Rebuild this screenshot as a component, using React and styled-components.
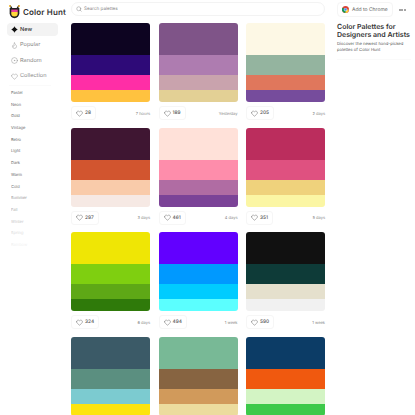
import React from 'react';
import styled, {createGlobalStyle} from 'styled-components';
import {Search, Flame, CircleDot, Heart} from 'lucide-react';

const GlobalStyle = createGlobalStyle`
  html, body {
    margin: 0;
    height: 415px;
    overflow: hidden;
    background: #fff;
    font-family: "Inter", "Open Sans", sans-serif;
    text-rendering: geometricPrecision;
    color: #333;
  }
`;

const palettes = [
  {colors: ['#0d0421', '#2e0a78', '#ff2ea6', '#ffc23f'], likes: 28, time: '7 hours'},
  {colors: ['#7f5488', '#ae7cb0', '#c9a3ad', '#e3d095'], likes: 189, time: 'Yesterday'},
  {colors: ['#fdf8e5', '#94b49f', '#e0775c', '#764c9c'], likes: 205, time: '2 days'},
  {colors: ['#3f1632', '#d2552f', '#f9cbaa', '#f6e9e4'], likes: 297, time: '3 days'},
  {colors: ['#ffe1d9', '#fe8dab', '#b06ca3', '#7b4397'], likes: 461, time: '4 days'},
  {colors: ['#bb2d5d', '#df5180', '#efd27c', '#fbf6a4'], likes: 351, time: '5 days'},
  {colors: ['#efe605', '#7fcf10', '#5ea816', '#2f7a0a'], likes: 324, time: '6 days'},
  {colors: ['#6200ff', '#0099ff', '#00ccff', '#5bffff'], likes: 494, time: '1 week'},
  {colors: ['#111111', '#0e3b38', '#e5e0cd', '#f1f1f1'], likes: 590, time: '1 week'},
  {colors: ['#3b5a67', '#5b8f80', '#7ccbd0', '#fde40e'], likes: 0, time: ''},
  {colors: ['#78b996', '#876441', '#d19a5b', '#ecdc9e'], likes: 0, time: ''},
  {colors: ['#0c3c66', '#f0590f', '#d3f4c4', '#3dc94a'], likes: 0, time: ''},
];

const tags = ['Pastel', 'Neon', 'Gold', 'Vintage', 'Retro', 'Light', 'Dark', 'Warm', 'Cold', 'Summer', 'Fall', 'Winter', 'Spring', 'Rainbow'];

const Page = styled.div`
  display: grid;
  grid-template-columns: 71px 254px 90px;
  grid-template-rows: 23px 392px;
  height: 415px;
  overflow: hidden;
`;

const LogoRow = styled.div`
  display: flex;
  align-items: center;
  gap: 2px;
  padding: 0 0 0 8px;
`;

const LogoName = styled.span`
  font-size: 8px;
  font-weight: 600;
  letter-spacing: 0.15px;
  color: #333;
  white-space: nowrap;
`;

const SearchCell = styled.div`
  padding-top: 2px;
`;

const SearchBar = styled.div`
  display: flex;
  align-items: center;
  gap: 2px;
  height: 14px;
  box-sizing: border-box;
  padding-left: 4px;
  border: 1px solid #f3f3f3;
  border-radius: 7px;
  color: #888;
  font-size: 4.6px;
`;

const TopRight = styled.div`
  display: flex;
  align-items: center;
  justify-content: space-between;
  padding: 2px 9px 0 12px;
  align-self: start;
`;

const ChromeButton = styled.div`
  display: flex;
  align-items: center;
  gap: 3px;
  height: 13px;
  padding: 0 4px;
  border: 1px solid #f5f5f5;
  border-radius: 4px;
  font-size: 5px;
  color: #666;
  white-space: nowrap;
`;

const Dots = styled.div`
  display: flex;
  gap: 0.6px;
`;

const Dot = styled.span`
  width: 2px;
  height: 2px;
  box-sizing: border-box;
  border: 0.6px solid #666;
  border-radius: 50%;
`;

const Sidebar = styled.nav`
  display: flex;
  flex-direction: column;
`;

const NavItem = styled.div`
  display: flex;
  align-items: center;
  gap: 2px;
  width: 51px;
  height: 13px;
  margin: 0 0 2.5px 7px;
  padding-left: 4px;
  border-radius: 4px;
  box-sizing: border-box;
  background: ${p => (p.$active ? '#f3f3f3' : 'transparent')};
  color: ${p => (p.$active ? '#333' : '#888')};
  font-size: 5.6px;
  font-weight: ${p => (p.$active ? 500 : 400)};
`;

const Tags = styled.div`
  display: flex;
  flex-direction: column;
  padding-top: 1px;
  margin-left: 9px;
  width: 42px;
  border-top: 1px solid #fafafa;
`;

const Tag = styled.div`
  height: 11.7px;
  line-height: 11.7px;
  padding-left: 2px;
  font-size: 4px;
  color: #666;
  opacity: ${p => p.$fade};
`;

const Grid = styled.main`
  display: grid;
  grid-template-columns: repeat(3, 79px);
  column-gap: 8.5px;
  align-content: start;
  row-gap: 25.5px;
`;

const Card = styled.div`
  display: flex;
  flex-direction: column;
  height: 79px;
`;

const Swatches = styled.div`
  display: grid;
  grid-template-rows: 32fr 20fr 15fr 12fr;
  height: 79px;
  flex-shrink: 0;
  border-radius: 3px;
  overflow: hidden;
`;

const Swatch = styled.div`
  background: ${p => p.$color};
`;

const CardFooter = styled.div`
  display: flex;
  justify-content: space-between;
  align-items: center;
  padding-top: 4px;
  font-size: 4px;
  color: #888;
`;

const LikeButton = styled.div`
  display: flex;
  align-items: center;
  gap: 2px;
  height: 12px;
  padding: 0 4px;
  border: 1px solid #f6f6f6;
  border-radius: 3px;
  font-size: 4.8px;
  font-weight: 500;
  color: #555;
`;

const Aside = styled.aside`
  padding: 0 4px 0 12px;
`;

const Title = styled.h1`
  margin: 0;
  font-size: 7px;
  line-height: 8px;
  font-weight: 600;
  color: #333;
`;

const Blurb = styled.p`
  margin: 2.5px 0 0;
  padding-bottom: 5.5px;
  font-size: 4.2px;
  line-height: 6px;
  color: #555;
  border-bottom: 1px solid #fafafa;
`;

const ChromeIcon = () => (
  <svg width="7" height="7" viewBox="0 0 24 24">
    <circle cx="12" cy="12" r="12" fill="#db4437" />
    <path d="M12 12 1.6 6A12 12 0 0 0 12 24l5.2-9z" fill="#0f9d58" />
    <path d="M12 12h10.9A12 12 0 0 1 12 24z" fill="#ffcd40" />
    <circle cx="12" cy="12" r="5.5" fill="#fff" />
    <circle cx="12" cy="12" r="4.2" fill="#4285f4" />
  </svg>
);

const Logo = () => (
  <svg width="13" height="14" viewBox="0 0 24 26">
    <path d="M4 1.5l2.5 4M20 1.5l-2.5 4" stroke="#222" strokeWidth="2.5" strokeLinecap="round" />
    <circle cx="3.5" cy="2" r="1.8" fill="#ffc23f" />
    <circle cx="20.5" cy="2" r="1.8" fill="#ffc23f" />
    <path d="M3 5.5h18v10a9 9 0 0 1-18 0z" fill="#222" />
    <path d="M6 8.5h12v4.5H6z" fill="#e83e9b" />
    <path d="M6 13h12v2.5a6 6 0 0 1-12 0z" fill="#ffd93b" />
  </svg>
);

const SparkIcon = () => (
  <svg width="7" height="7" viewBox="0 0 24 24" fill="#111">
    <path d="M12 0c1 6 5 10 12 12-7 2-11 6-12 12-1-6-5-10-12-12 7-2 11-6 12-12z" />
    <circle cx="12" cy="12" r="7" />
  </svg>
);

const App = () => (
  <>
    <GlobalStyle />
    <Page>
      <LogoRow>
        <Logo />
        <LogoName>Color Hunt</LogoName>
      </LogoRow>
      <SearchCell>
        <SearchBar>
          <Search size={6} strokeWidth={2} />
          Search palettes
        </SearchBar>
      </SearchCell>
      <TopRight>
        <ChromeButton>
          <ChromeIcon />
          Add to Chrome
        </ChromeButton>
        <Dots>
          <Dot />
          <Dot />
          <Dot />
        </Dots>
      </TopRight>
      <Sidebar>
        <NavItem $active>
          <SparkIcon />
          New
        </NavItem>
        <NavItem>
          <Flame size={7} strokeWidth={1.5} />
          Popular
        </NavItem>
        <NavItem>
          <CircleDot size={7} strokeWidth={1.5} />
          Random
        </NavItem>
        <NavItem>
          <Heart size={7} strokeWidth={1.5} />
          Collection
        </NavItem>
        <Tags>
          {tags.map((tag, i) => (
            <Tag key={tag} $fade={i < 8 ? 1 : Math.max(0.08, 1 - (i - 7) * 0.15)}>{tag}</Tag>
          ))}
        </Tags>
      </Sidebar>
      <Grid>
        {palettes.map((palette, i) => (
          <Card key={i}>
            <Swatches>
              {palette.colors.map(color => <Swatch key={color} $color={color} />)}
            </Swatches>
            {palette.likes > 0 && (
              <CardFooter>
                <LikeButton>
                  <Heart size={7} strokeWidth={1.5} />
                  {palette.likes}
                </LikeButton>
                {palette.time}
              </CardFooter>
            )}
          </Card>
        ))}
      </Grid>
      <Aside>
        <Title>Color Palettes for Designers and Artists</Title>
        <Blurb>Discover the newest hand-picked palettes of Color Hunt</Blurb>
      </Aside>
    </Page>
  </>
);

export default App;
